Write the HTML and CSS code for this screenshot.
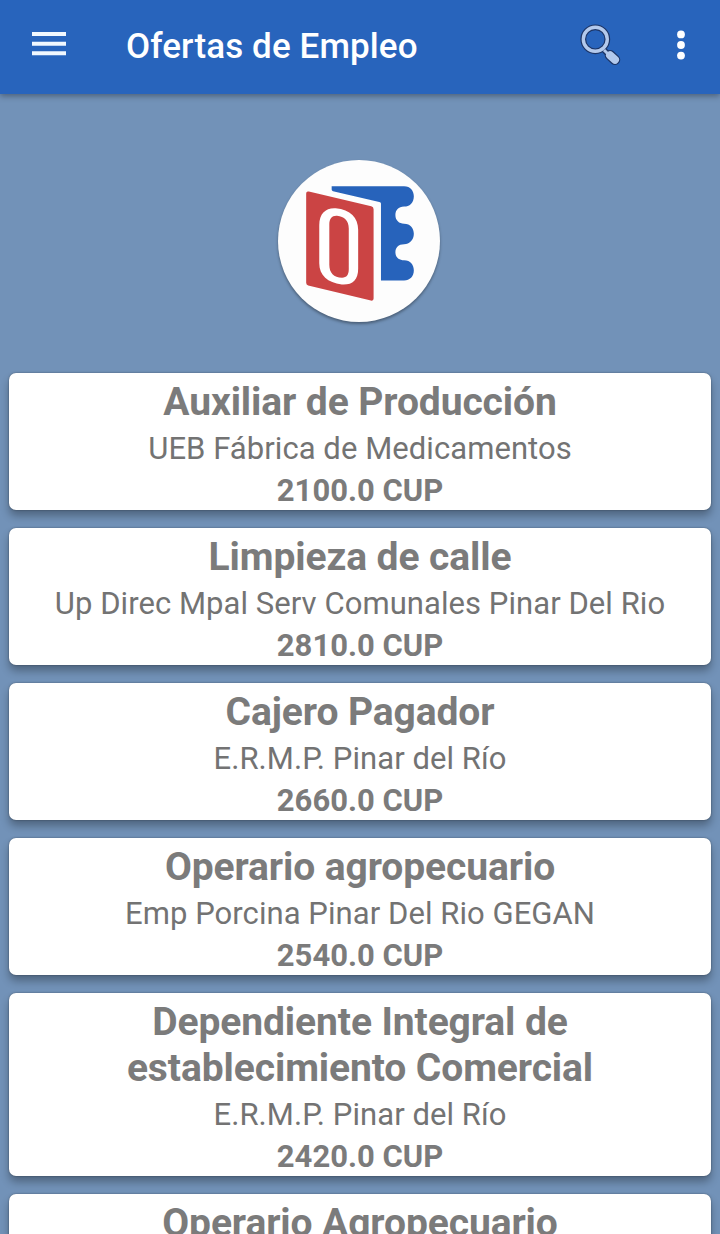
FILE: index.html
```
<!DOCTYPE html>
<html lang="es">
<head>
    <meta charset="UTF-8">
    <meta name="viewport" content="width=device-width, initial-scale=1.0">
    <title>Ofertas de Empleo</title>
    <link rel="stylesheet" href="styles.css">
</head>
<body>
    <header class="toolbar">
        <svg class="menu-icon" viewBox="0 0 34 24">
            <path d="M0 0h34v4H0zM0 9.7h34v4H0zM0 19.2h34v4H0z" fill="#f1f8ff"/>
        </svg>
        <h1>Ofertas de Empleo</h1>
        <svg class="search-icon" viewBox="0 0 42 42">
            <path d="M24.5 26.5l4 4" stroke="#1d3566" stroke-width="6"/>
            <path d="M30 31.2l5 4.6" stroke="#1d3566" stroke-width="10.5" stroke-linecap="round"/>
            <circle cx="15.3" cy="15.3" r="12" fill="none" stroke="#1d3566" stroke-width="5.8"/>
            <path d="M24 26l5 5" stroke="#b3c9ec" stroke-width="3"/>
            <path d="M30 31.2l5 4.6" stroke="#b3c9ec" stroke-width="8" stroke-linecap="round"/>
            <circle cx="15.3" cy="15.3" r="12" fill="none" stroke="#b3c9ec" stroke-width="3.4"/>
        </svg>
        <svg class="more-icon" viewBox="0 0 8 30">
            <circle cx="4" cy="4.4" r="3.9" fill="#fff"/>
            <circle cx="4" cy="15" r="3.9" fill="#fff"/>
            <circle cx="4" cy="25.6" r="3.9" fill="#fff"/>
        </svg>
    </header>

    <main>
        <div class="logo">
            <svg viewBox="42 46 483 483">
                <path d="M202 124H418C437 124 447 138 447 154C447 174 434 185 418 185C401 185 392 196 392 210C392 226 403 236 418 236C437 236 447 250 447 266C447 285 434 297 418 297C401 297 392 307 392 321C392 336 403 345 418 345C437 345 447 359 447 375C447 394 435 405 418 405H349V176Q349 172 344 171L206 139Q202 138 202 134Z" fill="#2763bb"/>
                <path d="M134 140L320 184Q327 186 327 193V459Q327 467 319 465L132 420Q126 418 126 412V146Q126 138 134 140Z" fill="#cb4444"/>
                <path fill-rule="evenodd" d="M165 240C165 205 185 188 214 190C258 194 281 218 281 254V370C281 405 263 419 232 417C190 412 165 390 165 354ZM195 238V358C195 382 208 396 233 397C247 397 253 388 253 372V250C253 227 240 214 218 212C203 211 195 220 195 238Z" fill="#fff"/>
            </svg>
        </div>

        <div class="offers">
            <div class="card">
                <h2>Auxiliar de Producción</h2>
                <p class="company">UEB Fábrica de Medicamentos</p>
                <p class="salary">2100.0 CUP</p>
            </div>
            <div class="card">
                <h2>Limpieza de calle</h2>
                <p class="company">Up Direc Mpal Serv Comunales Pinar Del Rio</p>
                <p class="salary">2810.0 CUP</p>
            </div>
            <div class="card">
                <h2>Cajero Pagador</h2>
                <p class="company">E.R.M.P. Pinar del Río</p>
                <p class="salary">2660.0 CUP</p>
            </div>
            <div class="card">
                <h2>Operario agropecuario</h2>
                <p class="company">Emp Porcina Pinar Del Rio GEGAN</p>
                <p class="salary">2540.0 CUP</p>
            </div>
            <div class="card">
                <h2>Dependiente Integral de establecimiento Comercial</h2>
                <p class="company">E.R.M.P. Pinar del Río</p>
                <p class="salary">2420.0 CUP</p>
            </div>
            <div class="card">
                <h2>Operario Agropecuario</h2>
            </div>
        </div>
    </main>
</body>
</html>
```
FILE: styles.css
```
* {
    box-sizing: border-box;
}

/* Body styles */
body {
    font-family: Roboto, sans-serif;
    margin: 0;
    height: 1234px;
    overflow: hidden;
    background-color: #7292b8;
    color: #7b7b7b;
}

/* Toolbar styles */
.toolbar {
    display: flex;
    align-items: center;
    height: 94px;
    padding: 0 35px 4px 32px;
    background-color: #2864bc;
    box-shadow: 0 2px 6px rgba(0, 0, 0, 0.35);
}

.toolbar h1 {
    flex: 1;
    margin: 3px 0 0 60px;
    font-size: 35px;
    font-weight: 500;
    letter-spacing: 0.1px;
    color: #fff;
}

.menu-icon {
    width: 34px;
    height: 24px;
    margin-bottom: 2px;
}

.search-icon {
    width: 42px;
    height: 42px;
    margin-right: 55px;
}

.more-icon {
    width: 8px;
    height: 30px;
}

/* Logo styles */
.logo {
    width: 162px;
    height: 162px;
    margin: 66px auto 51px 278px;
    border-radius: 50%;
    background-color: #fdfdfd;
    box-shadow: 0 2px 3px rgba(0, 0, 0, 0.35);
}

.logo svg {
    display: block;
}

/* Offer list styles */
.offers {
    display: flex;
    flex-direction: column;
    gap: 18px;
    padding: 0 9px;
}

.card {
    padding: 6px 16px 1px;
    border-radius: 7px;
    background-color: #fff;
    text-align: center;
    box-shadow: 0 6px 9px rgba(0, 0, 0, 0.3), 0 0 2px rgba(0, 0, 0, 0.4);
}

.card h2 {
    margin: 0;
    font-size: 39px;
    line-height: 46px;
    letter-spacing: -0.1px;
}

.card p {
    margin: 5px 0 0;
    font-size: 31px;
    line-height: 37px;
}

.card .company {
    letter-spacing: 0.06px;
    color: #737373;
}

.card .salary {
    font-weight: bold;
}
```
